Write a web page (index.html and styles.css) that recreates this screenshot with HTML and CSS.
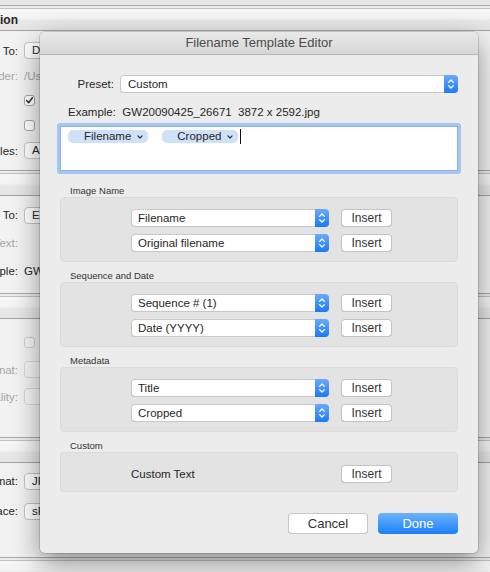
FILE: index.html
```html
<!DOCTYPE html>
<html>
<head>
<meta charset="utf-8">
<link rel="stylesheet" href="styles.css">
</head>
<body>
<div class="bgwin">
  <div class="bg-top"></div>
  <div class="sep"></div>
  <div class="hdr"><span class="hdr-text">Export Location</span></div>
  <div class="sec sec1">
    <div class="row r25"><div class="lab">Export To:</div><div class="bpopup">Desktop</div></div>
    <div class="row r25"><div class="lab dim">Folder:</div><div class="val dim">/Us</div></div>
    <div class="row r25"><div class="lab"></div><div class="check on"><svg viewBox="0 0 11 11" width="11" height="11"><path d="M2.6 5.6 L4.6 7.8 L8.4 2.8" fill="none" stroke="#333" stroke-width="1.5" stroke-linecap="round" stroke-linejoin="round"/></svg></div></div>
    <div class="row r25"><div class="lab"></div><div class="check"></div></div>
    <div class="row r25"><div class="lab">Existing Files:</div><div class="bpopup">Ask what to do</div></div>
  </div>
  <div class="sep"></div>
  <div class="hdr"></div>
  <div class="sec sec2">
    <div class="row r28"><div class="lab">Rename To:</div><div class="bpopup">Edit</div></div>
    <div class="row r28"><div class="lab dim">Custom Text:</div></div>
    <div class="row r28"><div class="lab">Example:</div><div class="val">GW</div></div>
  </div>
  <div class="sep"></div>
  <div class="hdr"></div>
  <div class="sec sec3">
    <div class="row r27"><div class="lab"></div><div class="check off"></div></div>
    <div class="row r27"><div class="lab dim">Video Format:</div><div class="bpopup off"></div></div>
    <div class="row r27"><div class="lab dim">Quality:</div><div class="bpopup off"></div></div>
  </div>
  <div class="sep"></div>
  <div class="hdr"></div>
  <div class="sec sec4">
    <div class="row r30"><div class="lab">Image Format:</div><div class="bpopup">JPEG</div></div>
    <div class="row r30"><div class="lab">Color Space:</div><div class="bpopup">sRGB</div></div>
  </div>
  <div class="sep"></div>
  <div class="hdr"></div>
</div>

<div class="dialog">
  <div class="titlebar">Filename Template Editor</div>
  <div class="dbody">
    <div class="preset-row">
      <div class="plabel">Preset:</div>
      <div class="popup"><span class="ptext ptext-preset">Custom</span><span class="stepper"><svg viewBox="0 0 14 18" width="14" height="18"><path d="M4.6 7.4 L7 5 L9.4 7.4 M4.6 10.6 L7 13 L9.4 10.6" fill="none" stroke="#fff" stroke-width="1.3" stroke-linecap="round" stroke-linejoin="round"/></svg></span></div>
    </div>
    <div class="example">Example:&nbsp; GW20090425_26671&nbsp; 3872 x 2592.jpg</div>
    <div class="tokenfield">
      <span class="token">Filename<svg class="tchev" viewBox="0 0 6 4" width="6" height="4"><path d="M0.9 0.9 L3 3 L5.1 0.9" fill="none" stroke="#333" stroke-width="1.2" stroke-linecap="round" stroke-linejoin="round"/></svg></span>
      <span class="token">Cropped<svg class="tchev" viewBox="0 0 6 4" width="6" height="4"><path d="M0.9 0.9 L3 3 L5.1 0.9" fill="none" stroke="#333" stroke-width="1.2" stroke-linecap="round" stroke-linejoin="round"/></svg></span>
      <span class="caret"></span>
    </div>

    <div class="glabel first">Image Name</div>
    <div class="group">
      <div class="popup"><span class="ptext">Filename</span><span class="stepper"><svg viewBox="0 0 14 18" width="14" height="18"><path d="M4.6 7.4 L7 5 L9.4 7.4 M4.6 10.6 L7 13 L9.4 10.6" fill="none" stroke="#fff" stroke-width="1.3" stroke-linecap="round" stroke-linejoin="round"/></svg></span></div>
      <div class="insert">Insert</div>
      <div class="popup"><span class="ptext">Original filename</span><span class="stepper"><svg viewBox="0 0 14 18" width="14" height="18"><path d="M4.6 7.4 L7 5 L9.4 7.4 M4.6 10.6 L7 13 L9.4 10.6" fill="none" stroke="#fff" stroke-width="1.3" stroke-linecap="round" stroke-linejoin="round"/></svg></span></div>
      <div class="insert">Insert</div>
    </div>

    <div class="glabel">Sequence and Date</div>
    <div class="group">
      <div class="popup"><span class="ptext">Sequence # (1)</span><span class="stepper"><svg viewBox="0 0 14 18" width="14" height="18"><path d="M4.6 7.4 L7 5 L9.4 7.4 M4.6 10.6 L7 13 L9.4 10.6" fill="none" stroke="#fff" stroke-width="1.3" stroke-linecap="round" stroke-linejoin="round"/></svg></span></div>
      <div class="insert">Insert</div>
      <div class="popup"><span class="ptext">Date (YYYY)</span><span class="stepper"><svg viewBox="0 0 14 18" width="14" height="18"><path d="M4.6 7.4 L7 5 L9.4 7.4 M4.6 10.6 L7 13 L9.4 10.6" fill="none" stroke="#fff" stroke-width="1.3" stroke-linecap="round" stroke-linejoin="round"/></svg></span></div>
      <div class="insert">Insert</div>
    </div>

    <div class="glabel">Metadata</div>
    <div class="group">
      <div class="popup"><span class="ptext">Title</span><span class="stepper"><svg viewBox="0 0 14 18" width="14" height="18"><path d="M4.6 7.4 L7 5 L9.4 7.4 M4.6 10.6 L7 13 L9.4 10.6" fill="none" stroke="#fff" stroke-width="1.3" stroke-linecap="round" stroke-linejoin="round"/></svg></span></div>
      <div class="insert">Insert</div>
      <div class="popup"><span class="ptext">Cropped</span><span class="stepper"><svg viewBox="0 0 14 18" width="14" height="18"><path d="M4.6 7.4 L7 5 L9.4 7.4 M4.6 10.6 L7 13 L9.4 10.6" fill="none" stroke="#fff" stroke-width="1.3" stroke-linecap="round" stroke-linejoin="round"/></svg></span></div>
      <div class="insert">Insert</div>
    </div>

    <div class="glabel">Custom</div>
    <div class="group group-custom">
      <div class="ctext">Custom Text</div>
      <div class="insert">Insert</div>
    </div>

    <div class="buttons">
      <div class="btn cancel">Cancel</div>
      <div class="btn done">Done</div>
    </div>
  </div>
</div>
</body>
</html>
```
FILE: styles.css
```css
html, body {
  margin: 0;
  padding: 0;
}
body {
  width: 490px;
  height: 572px;
  overflow: hidden;
  position: relative;
  font-family: "Liberation Sans", Arial, sans-serif;
  color: #262626;
  background: #f2f2f2;
}

/* ---------- background window ---------- */
.bgwin {
  background: #f2f2f2;
}
.bg-top {
  height: 5px;
  background: #e7e7e7;
}
.sep {
  height: 2px;
  border-top: 1px solid #a8a8a8;
  border-bottom: 1px solid #c2c2c2;
  background: #ececec;
}
.hdr {
  height: 21px;
  border-bottom: 1px solid #a3a3a3;
  background: linear-gradient(#f7f7f7 0%, #f3f3f3 45%, #e8e8e8 55%, #e4e4e4 100%);
  display: flex;
  align-items: center;
}
.hdr-text {
  font-weight: bold;
  font-size: 12px;
  width: 18px;
  display: flex;
  justify-content: flex-end;
  white-space: nowrap;
}
.sec1 { height: 139px; box-sizing: border-box; padding-top: 7px; }
.sec2 { height: 97px; box-sizing: border-box; padding-top: 5px; }
.sec3 { height: 118px; box-sizing: border-box; padding-top: 10px; }
.sec4 { height: 94px; box-sizing: border-box; padding-top: 3px; }

.row {
  display: flex;
  align-items: center;
  font-size: 11.5px;
}
.r25 { height: 25px; }
.r27 { height: 27px; }
.r28 { height: 28px; }
.r30 { height: 30px; }
.lab {
  width: 18px;
  flex: none;
  display: flex;
  justify-content: flex-end;
  white-space: nowrap;
}
.dim { color: #a5a5a5; }
.val {
  margin-left: 6px;
  width: 22px;
  overflow: hidden;
  white-space: nowrap;
}
.bpopup {
  margin-left: 6px;
  width: 24px;
  height: 17px;
  box-sizing: border-box;
  background: #fff;
  border: 1px solid #c3c3c3;
  border-radius: 4px;
  padding-left: 7px;
  line-height: 15px;
  white-space: nowrap;
  overflow: hidden;
}
.bpopup.off {
  background: #f6f6f6;
  border-color: #d6d6d6;
}
.check {
  margin-left: 6px;
  width: 11px;
  height: 11px;
  box-sizing: border-box;
  background: #fff;
  border: 1px solid #a9a9a9;
  border-radius: 3px;
  display: flex;
  align-items: center;
  justify-content: center;
}
.check svg { display: block; margin: -1px; }
.check.off {
  background: #f7f7f7;
  border-color: #cfcfcf;
}

/* ---------- dialog ---------- */
.dialog {
  position: absolute;
  left: 40px;
  top: 32px;
  width: 438px;
  background: #ececec;
  border-radius: 5px;
  overflow: hidden;
  box-shadow: 0 10px 28px rgba(0, 0, 0, 0.42), 0 0 0 1px rgba(0, 0, 0, 0.12);
}
.titlebar {
  height: 22px;
  line-height: 22px;
  border-bottom: 1px solid #b7b7b7;
  background: linear-gradient(#e9e9e9, #d6d6d6);
  text-align: center;
  font-size: 13px;
  color: #4b4b4b;
}
.dbody {
  padding: 20px 20px 19px;
}
.preset-row {
  display: grid;
  grid-template-columns: 54px 1fr;
  column-gap: 6px;
  align-items: center;
  height: 18px;
}
.plabel {
  text-align: right;
  font-size: 11.5px;
  color: #262626;
}
.popup {
  height: 18px;
  display: flex;
  align-items: center;
  background: #fff;
  border-radius: 4px;
  overflow: hidden;
  box-shadow: inset 0 0 0 1px #c8c8c8, inset 0 -1px 0 #b2b2b2;
}
.ptext {
  flex: 1;
  padding-left: 7px;
  font-size: 11.5px;
  white-space: nowrap;
  color: #262626;
}
.ptext-preset { padding-left: 8px; }
.stepper {
  width: 14px;
  height: 18px;
  flex: none;
  background: linear-gradient(#6aabfa, #1c79f5);
}
.stepper svg { display: block; }

.example {
  margin-top: 12px;
  padding-left: 8px;
  line-height: 14px;
  font-size: 11.5px;
  white-space: nowrap;
}
.tokenfield {
  margin: 4px -3px 0;
  height: 51px;
  box-sizing: border-box;
  border: 3px solid #a3c6f2;
  border-radius: 3px;
  background: #fff;
  box-shadow: inset 0 0 0 1px #8cb3ea;
  padding: 4px 8px;
  display: flex;
  align-items: flex-start;
}
.token {
  height: 13px;
  display: flex;
  align-items: center;
  gap: 6px;
  padding: 0 5px 0 16px;
  border-radius: 5px;
  background: #cfe1f8;
  font-size: 11.5px;
  line-height: 13px;
  color: #262626;
  margin-right: 14px;
}
.token:nth-of-type(2) { margin-right: 2px; padding-left: 15px; }
.tchev { display: block; flex: none; }
.caret {
  width: 1px;
  height: 15px;
  margin-top: -1px;
  background: #111;
}

.glabel {
  margin-top: 8px;
  padding-left: 10px;
  font-size: 9.5px;
  line-height: 12px;
  color: #333;
}
.glabel.first { margin-top: 11px; }
.group {
  background: #e3e3e3;
  border: 1px solid #dbdbdb;
  border-radius: 4px;
  padding: 11px 0 9px 70px;
  display: grid;
  grid-template-columns: 198px 51px;
  column-gap: 12px;
  row-gap: 7px;
  align-items: center;
}
.group-custom {
  padding-top: 12px;
  padding-bottom: 8px;
}
.ctext {
  font-size: 11.5px;
  color: #262626;
}
.insert {
  height: 18px;
  line-height: 18px;
  text-align: center;
  font-size: 12px;
  color: #333;
  background: #fff;
  border-radius: 4px;
  box-shadow: inset 0 0 0 1px #c3c3c3, inset 0 -1px 0 #b0b0b0;
}

.buttons {
  margin-top: 21px;
  display: flex;
  justify-content: flex-end;
  gap: 10px;
}
.btn {
  width: 80px;
  height: 21px;
  line-height: 21px;
  text-align: center;
  font-size: 13px;
  border-radius: 4px;
}
.cancel {
  background: #fff;
  color: #333;
  box-shadow: inset 0 0 0 1px #c6c6c6, inset 0 -1px 0 #b0b0b0;
}
.done {
  background: linear-gradient(#6db3fc, #1b80fa);
  color: #fff;
}
```
